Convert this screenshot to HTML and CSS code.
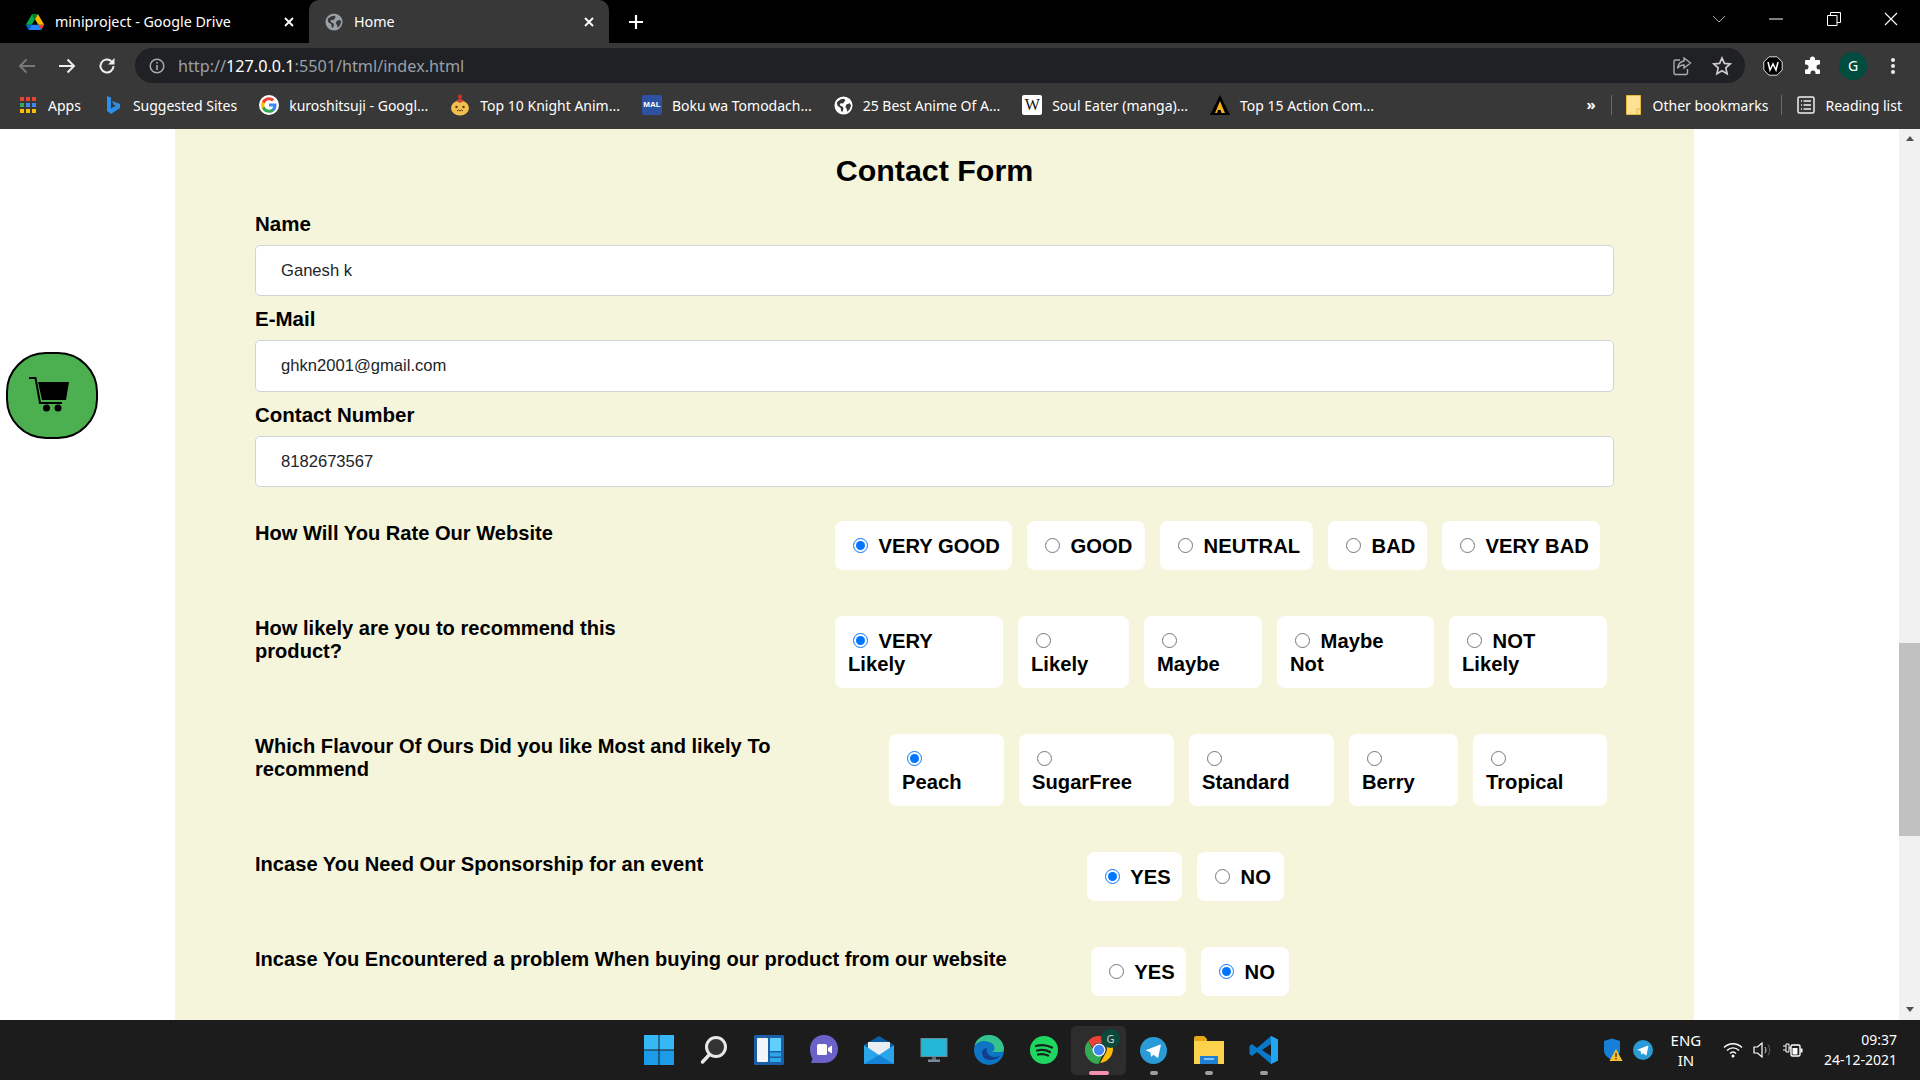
FILE: index.html
```html
<!DOCTYPE html>
<html lang="en">
<head>
  <meta charset="UTF-8">
  <meta name="viewport" content="width=device-width, initial-scale=1.0">
  <title>Home</title>
  <link rel="stylesheet" href="styles.css">
</head>
<body>
  <svg class="defs" width="0" height="0">
    <symbol id="globe" viewBox="0 0 20 20">
      <circle cx="10" cy="10" r="9.5" fill="currentColor"/>
      <path fill="#383838" d="M3 6.5 7 3.5l3.5-.5 1.5 1.5-1.5 2-1 1.5-2-.5-1.5 1 1 2 2 .5 1 2-1 3.5-1.5-.5-.5-3.5L3.500 10zM13 9l3.500-1.500L18 10l-1.500 4-2.500 2.500-.5-2.500-1.500-2.500z"/>
    </symbol>
    <symbol id="telegram" viewBox="0 0 24 24">
      <circle cx="12" cy="12" r="12" fill="#2a9bd6"/>
      <path fill="#fff" d="M5 11.800 17.500 6.800c.6-.2 1.100.1.900.9l-2.100 10c-.1.700-.6.800-1.100.5l-3.200-2.400-1.600 1.500c-.3.300-.5.300-.6-.1l-.6-3.700z"/>
    </symbol>
  </svg>

  <div class="tabstrip">
    <div class="tab">
      <svg class="tab-icon" width="18" height="16" viewBox="0 0 87.300 78">
        <path d="m6.600 66.850 3.850 6.650c.8 1.400 1.950 2.500 3.300 3.300l13.750-23.800h-27.500c0 1.550.4 3.100 1.200 4.500z" fill="#0066da"/>
        <path d="m43.650 25-13.750-23.800c-1.350.8-2.500 1.900-3.300 3.300l-25.400 44a9.060 9.060 0 0 0 -1.200 4.500h27.500z" fill="#00ac47"/>
        <path d="m73.550 76.800c1.350-.8 2.500-1.900 3.300-3.300l1.600-2.750 7.650-13.250c.8-1.400 1.200-2.950 1.200-4.500h-27.500l5.850 11.500z" fill="#ea4335"/>
        <path d="m43.650 25 13.750-23.800c-1.350-.8-2.900-1.200-4.500-1.200h-18.500c-1.600 0-3.150.45-4.500 1.200z" fill="#00832d"/>
        <path d="m59.800 53h-32.300l-13.750 23.800c1.350.8 2.900 1.200 4.500 1.200h50.800c1.600 0 3.150-.45 4.500-1.200z" fill="#2684fc"/>
        <path d="m73.400 26.500-12.700-22c-.8-1.400-1.950-2.500-3.300-3.300l-13.750 23.800 16.150 28h27.450c0-1.550-.4-3.100-1.200-4.500z" fill="#ffba00"/>
      </svg>
      <span class="tab-title">miniproject - Google Drive</span>
      <svg class="tab-close" width="12" height="12" viewBox="0 0 12 12"><path d="M2 2l8 8M10 2l-8 8" stroke="#fff" stroke-width="1.800"/></svg>
    </div>
    <div class="tab tab-active">
      <svg class="tab-icon tab-globe" width="18" height="18"><use href="#globe"/></svg>
      <span class="tab-title">Home</span>
      <svg class="tab-close" width="12" height="12" viewBox="0 0 12 12"><path d="M2 2l8 8M10 2l-8 8" stroke="#fff" stroke-width="1.800"/></svg>
    </div>
    <svg class="new-tab" width="16" height="16" viewBox="0 0 16 16"><path d="M8 1v14M1 8h14" stroke="#fff" stroke-width="2.200"/></svg>
    <div class="window-btns">
      <svg width="14" height="8" viewBox="0 0 14 8"><path d="M1 1l6 6 6-6" stroke="#aaa" fill="none"/></svg>
      <svg width="14" height="2" viewBox="0 0 14 2"><path d="M0 1h14" stroke="#fff"/></svg>
      <svg width="14" height="14" viewBox="0 0 14 14"><path d="M.5 3.500h9.500v10H.5zM3.500 3.500V.5h10v10H10" stroke="#fff" fill="none"/></svg>
      <svg width="14" height="14" viewBox="0 0 14 14"><path d="M1 1l12 12M13 1L1 13" stroke="#fff" stroke-width="1.100"/></svg>
    </div>
  </div>

  <div class="toolbar">
    <div class="nav-btn">
      <svg width="18" height="16" viewBox="0 0 18 16"><path d="M17 8H2M8.500 1.500 2 8l6.500 6.500" stroke="#777" stroke-width="2" fill="none"/></svg>
    </div>
    <div class="nav-btn">
      <svg width="18" height="16" viewBox="0 0 18 16"><path d="M1 8h15M9.500 1.500 16 8l-6.500 6.500" stroke="#eee" stroke-width="2" fill="none"/></svg>
    </div>
    <div class="nav-btn">
      <svg width="18" height="18" viewBox="0 0 18 18"><path d="M15.500 9a6.500 6.500 0 1 1-1.900-4.600" stroke="#eee" stroke-width="2" fill="none"/><path d="M16.500 1v6.500H10z" fill="#eee"/></svg>
    </div>
    <div class="address">
      <svg class="info" width="16" height="16" viewBox="0 0 16 16"><circle cx="8" cy="8" r="6.800" stroke="#aaa" stroke-width="1.500" fill="none"/><path d="M8 7v5M8 4v1.600" stroke="#aaa" stroke-width="1.600"/></svg>
      <span class="url">http://<b>127.0.0.1</b>:5501/html/index.html</span>
      <svg width="20" height="20" viewBox="0 0 20 20"><path d="M8 4H3.500A1.500 1.500 0 0 0 2 5.500V17a1.500 1.500 0 0 0 1.500 1.500H14a1.500 1.500 0 0 0 1.500-1.500v-4" stroke="#aaa" stroke-width="1.400" fill="none"/><path d="M12 2l6.500 5-6.500 5V9c-3 0-5 1-6.500 3.500C6 8.500 8.500 5.500 12 5z" stroke="#aaa" stroke-width="1.400" fill="none"/></svg>
      <svg class="star" width="20" height="20" viewBox="0 0 20 20"><path d="M10 2l2.400 5.400 5.800.6-4.400 3.900 1.300 5.800L10 14.700l-5.100 3 1.300-5.800L1.800 8l5.800-.6z" stroke="#ccc" stroke-width="1.700" fill="none"/></svg>
    </div>
    <div class="nav-btn">
      <svg width="20" height="20" viewBox="0 0 20 20"><path d="M6 .8h8L19.200 6v8L14 19.200H6L.8 14V6z" fill="#000" stroke="#ddd"/><path d="M5 6l2 8 3-6 3 6 2-8" stroke="#fff" stroke-width="1.500" fill="none"/></svg>
    </div>
    <div class="nav-btn">
      <svg width="20" height="20" viewBox="0 0 20 20"><path fill="#fff" d="M7 3a2.500 2.500 0 0 1 5 0v1h4a1 1 0 0 1 1 1v3.500h-1a2.500 2.500 0 0 0 0 5h1V17a1 1 0 0 1-1 1h-3.500v-1a2.500 2.500 0 0 0-5 0v1H3a1 1 0 0 1-1-1v-3.500h1a2.500 2.500 0 0 0 0-5H2V5a1 1 0 0 1 1-1h4z"/></svg>
    </div>
    <div class="nav-btn"><span class="avatar">G</span></div>
    <div class="nav-btn">
      <svg width="6" height="18" viewBox="0 0 6 18"><circle cx="3" cy="3" r="2" fill="#eee"/><circle cx="3" cy="9" r="2" fill="#eee"/><circle cx="3" cy="15" r="2" fill="#eee"/></svg>
    </div>
  </div>

  <div class="bookmarks">
    <div class="mark mark-small">
      <svg width="16" height="16" viewBox="0 0 16 16">
        <g fill="#ea4335"><rect x="0" y="0" width="4" height="4"/><rect x="6" y="0" width="4" height="4"/><rect x="12" y="0" width="4" height="4"/></g>
        <g fill="#4285f4"><rect x="6" y="6" width="4" height="4"/><rect x="12" y="6" width="4" height="4"/></g>
        <rect x="0" y="6" width="4" height="4" fill="#34a853"/>
        <g fill="#fbbc05"><rect x="0" y="12" width="4" height="4"/><rect x="6" y="12" width="4" height="4"/><rect x="12" y="12" width="4" height="4"/></g>
      </svg>
      <span>Apps</span>
    </div>
    <div class="mark mark-small">
      <svg width="16" height="20" viewBox="0 0 16 20"><path d="M2 1l4 1.500v11l5-3-2.500-1L7 6l8 3v4l-9 6-4-3z" fill="#2d8fe8"/></svg>
      <span>Suggested Sites</span>
    </div>
    <div class="mark">
      <svg class="g-logo" width="20" height="20" viewBox="-2 -2 28 28">
        <circle cx="12" cy="12" r="14" fill="#fff"/>
        <path fill="#4285F4" d="M22.560 12.250c0-.78-.07-1.530-.2-2.250H12v4.260h5.920c-.26 1.370-1.040 2.530-2.210 3.310v2.770h3.570c2.080-1.920 3.280-4.740 3.280-8.090z"/>
        <path fill="#34A853" d="M12 23c2.970 0 5.460-.98 7.280-2.660l-3.570-2.770c-.98.66-2.230 1.060-3.710 1.060-2.860 0-5.290-1.930-6.160-4.530H2.180v2.840C3.990 20.530 7.700 23 12 23z"/>
        <path fill="#FBBC05" d="M5.840 14.090c-.22-.66-.35-1.360-.35-2.090s.13-1.430.35-2.090V7.070H2.180C1.430 8.550 1 10.220 1 12s.43 3.450 1.180 4.930l2.850-2.220.81-.62z"/>
        <path fill="#EA4335" d="M12 5.380c1.620 0 3.060.56 4.210 1.640l3.150-3.150C17.450 2.090 14.970 1 12 1 7.700 1 3.990 3.470 2.180 7.070l3.660 2.840c.87-2.600 3.300-4.530 6.160-4.530z"/>
      </svg>
      <span>kuroshitsuji - Googl...</span>
    </div>
    <div class="mark">
      <svg width="20" height="22" viewBox="0 0 20 22">
        <ellipse cx="10" cy="14" rx="9" ry="7.500" fill="#f3c04f"/>
        <path d="M6 7l4-3 4 3-4 2z" fill="#c9472f"/>
        <circle cx="10" cy="2.500" r="2" fill="#d8312a"/>
        <circle cx="6.500" cy="13" r="1.200" fill="#5a3a10"/><circle cx="13.500" cy="13" r="1.200" fill="#5a3a10"/>
        <path d="M7 17l1.500-1 1.500 1 1.500-1 1.500 1" stroke="#5a3a10" fill="none"/>
      </svg>
      <span>Top 10 Knight Anim...</span>
    </div>
    <div class="mark">
      <span class="mal">MAL</span>
      <span>Boku wa Tomodach...</span>
    </div>
    <div class="mark">
      <svg class="white-globe" width="19" height="19"><use href="#globe"/></svg>
      <span>25 Best Anime Of A...</span>
    </div>
    <div class="mark">
      <span class="wiki">W</span>
      <span>Soul Eater (manga)...</span>
    </div>
    <div class="mark">
      <svg width="20" height="20" viewBox="0 0 20 20"><path d="M10 0l10 20H0z" fill="#000"/><path d="M10 6l5 12h-3.500l-1-3H8l-1 3H5z" fill="#f2b01e"/></svg>
      <span>Top 15 Action Com...</span>
    </div>
    <div class="mark-more">»</div>
    <div class="mark mark-folder">
      <svg width="15" height="20" viewBox="0 0 15 20"><path d="M.5.5h14v19H.5z" fill="#fde293" stroke="#e8b93c"/><path d="M11 19v-5h3.500" fill="none" stroke="#e8b93c"/></svg>
      <span>Other bookmarks</span>
    </div>
    <div class="mark mark-reading">
      <svg width="18" height="18" viewBox="0 0 18 18"><rect x="1" y="1" width="16" height="16" rx="1.500" fill="none" stroke="#eee" stroke-width="1.500"/><path d="M6.500 5H14M6.500 9H14M6.500 13H14M4 5h1M4 9h1M4 13h1" stroke="#eee" stroke-width="1.500"/></svg>
      <span>Reading list</span>
    </div>
  </div>

  <div class="viewport">
    <div class="cart-btn">
      <svg width="40" height="36" viewBox="0 0 40 36">
        <path d="M0 2h6.500l4.500 25h22" stroke="#000" stroke-width="2" fill="none"/>
        <path d="M9 6h31l-3 18H13z" fill="#000"/>
        <circle cx="17.500" cy="32" r="3.500"/>
        <circle cx="29" cy="32" r="3.500"/>
      </svg>
    </div>

    <div class="gutter-left"></div>

    <form class="panel">
      <h1>Contact Form</h1>

      <div class="field">
        <label>Name</label>
        <input type="text" value="Ganesh k">
      </div>
      <div class="field">
        <label>E-Mail</label>
        <input type="text" value="ghkn2001@gmail.com">
      </div>
      <div class="field field-last">
        <label>Contact Number</label>
        <input type="text" value="8182673567">
      </div>

      <div class="row">
        <div class="question q-wide">How Will You Rate Our Website</div>
        <div class="choices rate">
          <label class="choice"><input type="radio" name="rate" checked> VERY GOOD</label>
          <label class="choice"><input type="radio" name="rate"> GOOD</label>
          <label class="choice"><input type="radio" name="rate"> NEUTRAL</label>
          <label class="choice"><input type="radio" name="rate"> BAD</label>
          <label class="choice"><input type="radio" name="rate"> VERY BAD</label>
        </div>
      </div>

      <div class="row">
        <div class="question q-wide">How likely are you to recommend this<br>product?</div>
        <div class="choices recommend">
          <label class="choice"><input type="radio" name="recommend" checked> VERY<br>Likely</label>
          <label class="choice"><input type="radio" name="recommend"><br>Likely</label>
          <label class="choice"><input type="radio" name="recommend"><br>Maybe</label>
          <label class="choice"><input type="radio" name="recommend"> Maybe<br>Not</label>
          <label class="choice"><input type="radio" name="recommend"> NOT<br>Likely</label>
        </div>
      </div>

      <div class="row">
        <div class="question q-flavour">Which Flavour Of Ours Did you like Most and likely To<br>recommend</div>
        <div class="choices flavour">
          <label class="choice"><input type="radio" name="flavour" checked><br>Peach</label>
          <label class="choice"><input type="radio" name="flavour"><br>SugarFree</label>
          <label class="choice"><input type="radio" name="flavour"><br>Standard</label>
          <label class="choice"><input type="radio" name="flavour"><br>Berry</label>
          <label class="choice"><input type="radio" name="flavour"><br>Tropical</label>
        </div>
      </div>

      <div class="row">
        <div class="question q-sponsor">Incase You Need Our Sponsorship for an event</div>
        <div class="choices sponsor">
          <label class="choice"><input type="radio" name="sponsor" checked> YES</label>
          <label class="choice"><input type="radio" name="sponsor"> NO</label>
        </div>
      </div>

      <div class="row">
        <div class="question q-problem">Incase You Encountered a problem When buying our product from our website</div>
        <div class="choices problem">
          <label class="choice"><input type="radio" name="problem"> YES</label>
          <label class="choice"><input type="radio" name="problem" checked> NO</label>
        </div>
      </div>
    </form>

    <div class="gutter-right"></div>

    <div class="scrollbar">
      <div class="arrow-up"></div>
      <div class="thumb"></div>
      <div class="arrow-down"></div>
    </div>
  </div>

  <div class="taskbar">
    <div class="tasks">
      <div class="task">
        <svg width="30" height="30" viewBox="0 0 30 30"><g fill="#35b8f5"><rect width="14.500" height="14.500"/><rect x="15.500" width="14.500" height="14.500"/></g><g fill="#1c9be8"><rect y="15.500" width="14.500" height="14.500"/><rect x="15.500" y="15.500" width="14.500" height="14.500"/></g></svg>
      </div>
      <div class="task">
        <svg width="28" height="30" viewBox="0 0 28 30"><circle cx="16" cy="12" r="9.500" fill="#333" stroke="#e8e8e8" stroke-width="3"/><path d="M9.500 19.500 2.500 27" stroke="#e8e8e8" stroke-width="3.500" stroke-linecap="round"/></svg>
      </div>
      <div class="task">
        <svg width="30" height="30" viewBox="0 0 30 30"><rect width="30" height="30" rx="1.500" fill="#1c5fa8"/><rect x="3" y="3" width="11" height="24" rx="1" fill="#f2f6fa"/><rect x="16" y="3" width="11" height="13" fill="#5ed0fb"/><rect x="16" y="17.500" width="11" height="4" fill="#2fa8ea"/><rect x="16" y="23" width="11" height="4" fill="#2fa8ea"/></svg>
      </div>
      <div class="task">
        <svg width="30" height="32" viewBox="0 0 30 32"><path d="M15 1c8 0 14 6 14 14s-6 14-14 14H2l1.500-4C2 22 1 19 1 15 1 7 7 1 15 1z" fill="#6a62c9"/><rect x="8" y="10" width="10" height="11" rx="1.500" fill="#fff"/><path d="M19 14l4-2.500v8L19 17z" fill="#fff"/></svg>
      </div>
      <div class="task">
        <svg width="30" height="28" viewBox="0 0 30 28"><path d="M0 9 15 0l15 9-15 9z" fill="#0a5ea8"/><path d="M4 6h22v10L15 20 4 16z" fill="#e8eef4"/><path d="M0 9l15 10L30 9v19H0z" fill="#2aa5ec"/><path d="M0 28l15-9 15 9z" fill="#1584d6"/></svg>
      </div>
      <div class="task">
        <svg width="28" height="24" viewBox="0 0 28 24"><rect x="1" y=".5" width="26" height="18" fill="#25b8d6" stroke="#6a8a98"/><rect x="12" y="19" width="4" height="3" fill="#5a6a74"/><rect x="8" y="21.500" width="12" height="2.500" fill="#7a8a94"/></svg>
      </div>
      <div class="task">
        <svg width="30" height="30" viewBox="0 0 30 30"><circle cx="15" cy="15" r="15" fill="#0e74c4"/><path d="M30 15C30 6 23 0 15 0 8 0 2 4 .5 11 4 6 10 5 15 7c4 1.500 6 4 5.500 7-.5 2-2 3-3.500 3h9c2.500 0 4-1 4-2z" fill="#36c28c"/><path d="M8 17c0 5 3 8 8 8 4 0 7-1 10-4-5 2-9 1-11-1-2-1.500-3-4-2-7-3 .5-5 2-5 4z" fill="#123f8c"/></svg>
      </div>
      <div class="task">
        <svg width="28" height="28" viewBox="0 0 28 28"><circle cx="14" cy="14" r="14" fill="#1ed760"/><path d="M6 10c5-1.500 11-1 16 1.500M7 14.500c4-1 9-.7 13 1.500M8 18.500c3.500-.8 7-.5 10 1" stroke="#14261a" stroke-width="2.300" stroke-linecap="round" fill="none"/></svg>
      </div>
      <div class="task task-active">
        <svg width="28" height="28" viewBox="0 0 28 28">
          <path d="M14 0a14 14 0 0 1 12.100 7H14a7 7 0 0 0-6.500 4.500L3.200 5A14 14 0 0 1 14 0z" fill="#ea4335"/>
          <path d="M26.100 7A14 14 0 0 1 15 28l6-10.500A7 7 0 0 0 20 9.500z" fill="#fbbc05" transform="translate(0 -1)"/>
          <path d="M3.200 5 9 15a7 7 0 0 0 8 5l-3.500 8A14 14 0 0 1 3.200 5z" fill="#34a853"/>
          <circle cx="14" cy="14" r="6.500" fill="#fff"/><circle cx="14" cy="14" r="5.200" fill="#4285f4"/>
        </svg>
        <span class="task-badge">G</span>
      </div>
      <div class="task task-open">
        <svg width="27" height="27"><use href="#telegram"/></svg>
      </div>
      <div class="task task-open">
        <svg width="30" height="28" viewBox="0 0 30 28"><path d="M0 2a2 2 0 0 1 2-2h8l3 3v3H0z" fill="#e6a817"/><path d="M0 5h30v23H0z" fill="#fcd24c"/><rect x="6" y="20" width="18" height="8" fill="#1f7fd4"/><rect x="10" y="22" width="10" height="2" fill="#7cc4f5"/></svg>
      </div>
      <div class="task task-open">
        <svg width="30" height="30" viewBox="0 0 30 30"><path fill-rule="evenodd" fill="#0a78c8" d="M22 1 29 4.500v21L22 29 8 17l-5 4-2.500-2v-8L3 9l5 4zM22 9l-9 6 9 6z"/><path fill="#23a6f0" d="M22 1 29 4.500v21L22 29z"/></svg>
      </div>
    </div>
    <div class="tray">
      <svg width="20" height="24" viewBox="0 0 20 24"><path d="M1 3l8-2.500L17 3v9c0 5-4 8-8 10-4-2-8-5-8-10z" fill="#1680d8"/><path d="M13 11l6.500 12h-13z" fill="#fbc02d"/><path d="M13 15v4M13 20v1.500" stroke="#222" stroke-width="1.200"/></svg>
      <svg width="20" height="20"><use href="#telegram"/></svg>
      <div class="lang">ENG<br>IN</div>
      <svg width="20" height="16" viewBox="0 0 20 16"><path d="M1 5.500c5-5 13-5 18 0M4 8.500c3.500-3.500 8.500-3.500 12 0M7 11.500c2-2 4-2 6 0" stroke="#fff" stroke-width="1.400" fill="none"/><circle cx="10" cy="14" r="1.500" fill="#fff"/></svg>
      <svg width="20" height="18" viewBox="0 0 20 18"><path d="M1 6h3.500L9 2v14l-4.500-4H1z" stroke="#fff" stroke-width="1.200" fill="none"/><path d="M12 6c1.200 2 1.200 4 0 6" stroke="#ddd" fill="none"/><path d="M15 3.500c2.200 3.500 2.200 7.500 0 11" stroke="#666" fill="none"/></svg>
      <svg width="20" height="16" viewBox="0 0 20 16"><path d="M0 4h3M0 8h3M3 2h3v8H3zM6 6h2" stroke="#fff" fill="none"/><rect x="8" y="3" width="9" height="11" rx="1.500" fill="none" stroke="#fff" stroke-width="1.400"/><rect x="9.500" y="6" width="5" height="6.500" fill="#fff"/><rect x="17.500" y="6.500" width="2" height="4" fill="#fff"/></svg>
      <div class="clock">09:37<br>24-12-2021</div>
    </div>
  </div>
</body>
</html>
```

FILE: styles.css
```css
* {
  box-sizing: border-box;
}
html, body {
  margin: 0;
  height: 100%;
  overflow: hidden;
}
body {
  width: 1920px;
  height: 1080px;
  background: #fff;
  font-family: "Liberation Sans", Arial, sans-serif;
  display: flex;
  flex-direction: column;
}
.defs {
  position: absolute;
}

/* browser chrome */
.tabstrip {
  height: 43px;
  background: #000;
  display: flex;
  align-items: stretch;
  color: #fff;
  font-family: "Noto Sans", sans-serif;
  font-size: 14.3px;
}
.tab {
  width: 309px;
  display: flex;
  align-items: center;
  padding: 0 14px 0 26px;
}
.tab-active {
  width: 300px;
  padding: 0 14px 0 16px;
  background: #383838;
  border-radius: 10px 10px 0 0;
}
.tab-icon {
  margin-right: 11px;
}
.tab-globe {
  color: #9aa0a6;
  margin-right: 11px;
}
.tab-title {
  flex: 1;
  white-space: nowrap;
}
.new-tab {
  margin: 14px 0 0 19px;
}
.window-btns {
  margin-left: auto;
  display: flex;
  align-items: center;
  width: 230px;
  padding: 0 22px 6px 22px;
  justify-content: space-between;
}
.toolbar {
  height: 40px;
  background: #383838;
  display: flex;
  align-items: flex-end;
  padding: 0 7px;
}
.nav-btn {
  width: 40px;
  height: 35px;
  display: flex;
  align-items: center;
  justify-content: center;
}
.address {
  flex: 1;
  height: 35px;
  margin: 0 8px;
  background: #202124;
  border-radius: 18px;
  display: flex;
  align-items: center;
  padding: 0 13px 0 14px;
  font-family: "Noto Sans", sans-serif;
  font-size: 16.2px;
  color: #9aa0a6;
}
.info {
  margin-right: 13px;
}
.url {
  flex: 1;
}
.url b {
  font-weight: 400;
  color: #fff;
}
.star {
  margin-left: 20px;
}
.avatar {
  width: 28px;
  height: 28px;
  border-radius: 50%;
  background: #004d40;
  color: #fff;
  font-family: "Noto Sans", sans-serif;
  font-size: 14px;
  display: flex;
  align-items: center;
  justify-content: center;
}
.bookmarks {
  height: 46px;
  background: #383838;
  display: flex;
  align-items: center;
  padding: 0 0 2px 18px;
  color: #fff;
  font-family: "Noto Sans", sans-serif;
  font-size: 14px;
  white-space: nowrap;
}
.mark {
  display: flex;
  align-items: center;
  margin-right: 22px;
}
.mark > svg, .mal, .wiki {
  margin-right: 10px;
  flex: none;
}
.mark-small > svg {
  margin: 0 12px 0 2px;
}
.mal {
  width: 20px;
  height: 20px;
  background: #2e51a2;
  border-radius: 2px;
  color: #fff;
  font-family: "Liberation Sans", sans-serif;
  font-size: 8px;
  font-weight: bold;
  text-align: center;
  line-height: 20px;
}
.wiki {
  width: 20px;
  height: 20px;
  background: #fff;
  border-radius: 2px;
  color: #111;
  font-family: "Liberation Serif", serif;
  font-size: 16px;
  text-align: center;
  line-height: 20px;
}
.white-globe {
  color: #fff;
}
.mark-more {
  margin-left: auto;
  width: 37px;
  height: 20px;
  line-height: 18px;
  padding-left: 12px;
  font-size: 15px;
  font-weight: 700;
  border-right: 1px solid #6a6a6a;
}
.mark-folder {
  margin: 0;
  padding: 0 13px 0 14px;
  height: 20px;
  border-right: 1px solid #6a6a6a;
}
.mark-folder > svg {
  margin-right: 12px;
}
.mark-reading {
  margin: 0;
  padding: 0 18px 0 15px;
}

/* page */
.viewport {
  position: relative;
  flex: 1;
  display: flex;
  min-height: 0;
  overflow: hidden;
}
.gutter-left {
  width: 175px;
}
.gutter-right {
  flex: 1;
}
.panel {
  width: 1519px;
  background: #f5f5dc;
  padding: 22px 80px 0;
}
h1 {
  margin: 0 0 22.9px;
  font-size: 30.4px;
  line-height: 38px;
  text-align: center;
  color: #000;
}
.field {
  margin-bottom: 11px;
}
.field-last {
  margin-bottom: 33.6px;
}
.field label {
  display: block;
  height: 23px;
  margin-bottom: 10px;
  font-size: 20.5px;
  line-height: 23px;
  font-weight: bold;
}
.field input {
  display: block;
  width: 100%;
  height: 51.5px;
  padding: 0 25px;
  background: #fff;
  border: 1px solid #ced4da;
  border-radius: 5px;
  font-family: "Liberation Sans", Arial, sans-serif;
  font-size: 16.6px;
  color: #212529;
}
.row {
  display: flex;
  margin-bottom: 46px;
}
.question {
  padding-top: 1px;
  font-size: 20.1px;
  line-height: 23px;
  font-weight: bold;
  white-space: nowrap;
  color: #000;
}
.q-wide {
  width: 580px;
}
.q-flavour {
  width: 634px;
}
.q-sponsor {
  width: 832px;
}
.q-problem {
  width: 836px;
}
.choices {
  display: grid;
  column-gap: 15px;
}
.rate {
  grid-template-columns: 177px 118px 153px 99px 158px;
}
.recommend {
  grid-template-columns: 168px 111px 118px 157px 158px;
}
.flavour {
  grid-template-columns: 115px 155px 145px 109px 134px;
}
.sponsor {
  grid-template-columns: 95px 87px;
}
.problem {
  grid-template-columns: 95px 88px;
}
.choice {
  background: #fff;
  border-radius: 8px;
  padding: 14px 13px 12px;
  font-size: 20.2px;
  line-height: 23px;
  font-weight: bold;
  white-space: nowrap;
  color: #000;
}
.choice input {
  width: 15px;
  height: 15px;
  margin: 2px 5px 0 5px;
}

.cart-btn {
  position: absolute;
  left: 6px;
  top: 223px;
  width: 92px;
  height: 87px;
  padding: 0 6px 4px 0;
  background: #4caf50;
  border: 2px solid #000;
  border-radius: 40px;
  display: flex;
  align-items: center;
  justify-content: center;
}

.scrollbar {
  width: 21px;
  background: #f1f1f1;
  display: flex;
  flex-direction: column;
  align-items: center;
}
.arrow-up, .arrow-down {
  width: 0;
  height: 0;
  border-left: 4.500px solid transparent;
  border-right: 4.500px solid transparent;
}
.arrow-up {
  margin-top: 7px;
  border-bottom: 5px solid #505050;
}
.thumb {
  width: 100%;
  height: 193px;
  margin-top: 502px;
  background: #c1c1c1;
}
.arrow-down {
  margin-top: auto;
  margin-bottom: 8px;
  border-top: 5px solid #505050;
}

/* windows taskbar */
.taskbar {
  height: 60px;
  background: #1c1c1c;
  display: grid;
  grid-template-columns: 1fr auto 1fr;
  color: #fff;
  font-family: "Noto Sans", sans-serif;
  font-size: 14px;
}
.tasks {
  grid-column: 2;
  display: flex;
  align-items: center;
  padding-left: 2px;
}
.task {
  position: relative;
  width: 55px;
  height: 49px;
  display: flex;
  align-items: center;
  justify-content: center;
}
.task-active {
  background: #2d2d2d;
  border-radius: 5px;
}
.task-active::after, .task-open::after {
  content: "";
  position: absolute;
  left: 50%;
  bottom: 0;
  height: 4px;
  border-radius: 2px;
  transform: translateX(-50%);
}
.task-active::after {
  width: 20px;
  background: #f48fb1;
}
.task-open::after {
  width: 8px;
  background: #9e9e9e;
}
.task-badge {
  position: absolute;
  top: 3px;
  right: 6px;
  width: 19px;
  height: 19px;
  border-radius: 50%;
  background: #0b4a3c;
  color: #cfd8d4;
  font-size: 11px;
  line-height: 19px;
  text-align: center;
}
.tray {
  grid-column: 3;
  display: flex;
  align-items: center;
  justify-content: flex-end;
  padding-right: 23px;
  gap: 10px;
}
.lang {
  width: 52px;
  margin: 0 1px 0 -3px;
  font-size: 15px;
  text-align: center;
  line-height: 20px;
}
.clock {
  margin-left: 11px;
  text-align: right;
  line-height: 20px;
}
```
